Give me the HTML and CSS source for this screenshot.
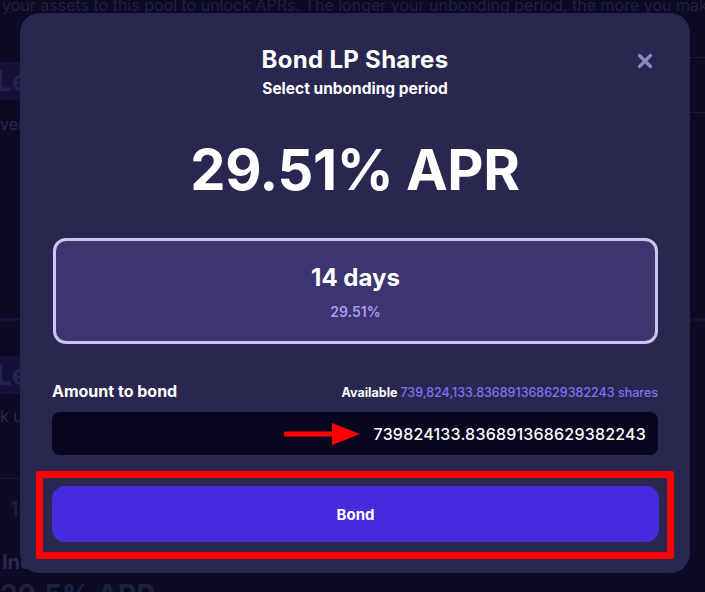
FILE: index.html
```html
<!DOCTYPE html>
<html>
<head>
<meta charset="utf-8">
<link rel="stylesheet" href="styles.css">
</head>
<body>
<div class="page">
  <p class="intro">your assets to this pool to unlock APRs. The longer your unbonding period, the more you make. <u>Learn more</u></p>
  <div class="bg-row">
    <div class="bg-left">
      <div class="bg-head">Le</div>
      <div class="bg-text">ver</div>
    </div>
    <div class="bg-right">
      <div class="bg-head">Li</div>
    </div>
  </div>
  <div class="bg-row2">
    <div class="bg-left">
      <div class="bg-head">Le</div>
      <div class="bg-text">k u</div>
      <div class="bg-card">14</div>
      <div class="bg-inc">Inc</div>
      <div class="bg-apr">29.5% APR</div>
    </div>
  </div>
</div>

<div class="modal">
  <div class="modal-head">
    <h1 class="title">Bond LP Shares</h1>
    <p class="subtitle">Select unbonding period</p>
    <button class="close" aria-label="Close">
      <svg width="16" height="16" viewBox="0 0 16 16"><path d="M2.5 2.5 L13.5 13.5 M13.5 2.5 L2.5 13.5" stroke="#8f89c2" stroke-width="3.2" stroke-linecap="round"/></svg>
    </button>
  </div>
  <div class="apr">29.51% APR</div>
  <div class="period">
    <div class="period-days">14 days</div>
    <div class="period-apr">29.51%</div>
  </div>
  <div class="amount-row">
    <span class="amount-label">Amount to bond</span>
    <span class="avail">Available <span class="avail-val">739,824,133.836891368629382243 shares</span></span>
  </div>
  <div class="input">
    <svg class="arrow" width="78" height="24" viewBox="0 0 78 24"><path d="M2 12 H50" stroke="#ff0000" stroke-width="5" stroke-linecap="round"/><path d="M48 1 L76 12 L48 23 Z" fill="#ff0000"/></svg>
    <span class="input-val">739824133.836891368629382243</span>
  </div>
  <div class="highlight">
    <button class="bond">Bond</button>
  </div>
</div>
</body>
</html>
```
FILE: styles.css
```css
* { box-sizing: border-box; }
html, body { margin: 0; padding: 0; }
body {
  width: 705px;
  height: 592px;
  overflow: hidden;
  background: #0d0a25;
  font-family: Inter, "Liberation Sans", sans-serif;
  position: relative;
}
.page { color: #2a2748; }
.intro {
  margin: -5px 0 0 2px;
  font-size: 16px;
  line-height: 20px;
  white-space: nowrap;
  color: #24213f;
}
.bg-row { display: flex; justify-content: space-between; margin-top: 47px; }
.bg-left { width: 300px; }
.bg-head {
  background: #15113a;
  height: 38px;
  font-size: 28px;
  font-weight: 700;
  line-height: 38px;
  margin-left: -14px;
  padding-left: 10px;
  color: #262250;
}
.bg-text { font-size: 16px; padding: 14px 0 0 0; color: #2b2850; }
.bg-right { width: 90px; border-top: 1px solid #1b1740; border-bottom: 1px solid #1b1740; height: 56px; margin-top: -5px; }
.bg-right .bg-head { background: transparent; margin-left: 0; padding: 8px 0 0 25px; color: #2a2752; }
.bg-row2 { margin-top: 184px; border-top: 3px solid #151236; padding-top: 35px; }
.bg-row2 .bg-text { padding-top: 12px; }
.bg-card { margin-top: 52px; height: 62px; font-size: 20px; font-weight: 700; color: #1f1c40; padding: 18px 0 0 10px; border-top: 1px solid #1a1640; }
.bg-inc { font-size: 20px; font-weight: 700; color: #2c2a4c; padding: 10px 0 0 2px; line-height: 24px; }
.bg-apr { font-size: 28px; font-weight: 700; color: #1d2240; line-height: 30px; margin-top: 6px; }

.modal {
  position: absolute;
  left: 20px;
  top: 13px;
  width: 670px;
  height: 560px;
  background: #29274f;
  border-radius: 20px;
  padding: 31px 32px 0;
  display: flex;
  flex-direction: column;
  color: #fff;
}
.modal-head { position: relative; text-align: center; }
.title {
  margin: 0;
  font-size: 24px;
  line-height: 32px;
  font-weight: 700;
  letter-spacing: 0.3px;
}
.subtitle {
  margin: 3px 0 0;
  font-size: 15.5px;
  line-height: 20px;
  font-weight: 700;
}
.close {
  position: absolute;
  right: 5px;
  top: 9px;
  background: none;
  border: 0;
  padding: 0;
  width: 16px;
  height: 16px;
}
.close svg { display: block; }
.apr {
  text-align: center;
  font-size: 56px;
  font-weight: 700;
  line-height: 72px;
  margin-top: 35px;
  letter-spacing: -0.4px;
}
.period {
  margin: 32px 0 0 1px;
  height: 106px;
  border: 3px solid #cdc4f1;
  border-radius: 13px;
  background: #3d3570;
  display: flex;
  flex-direction: column;
  align-items: center;
  padding-top: 22px;
}
.period-days { font-size: 24px; font-weight: 700; line-height: 30px; }
.period-apr { font-size: 14px; font-weight: 600; color: #a59cf0; margin-top: 10px; line-height: 18px; }
.amount-row {
  display: flex;
  justify-content: space-between;
  align-items: baseline;
  margin-top: 37px;
}
.amount-label { font-size: 16px; font-weight: 700; line-height: 20px; }
.avail { font-size: 12.5px; font-weight: 700; }
.avail-val { color: #7e72f3; font-weight: 500; }
.input {
  margin-top: 11px;
  height: 43px;
  background: #08061f;
  border-radius: 8px;
  display: flex;
  justify-content: flex-end;
  align-items: center;
  padding-right: 12px;
  gap: 12px;
  position: relative;
}
.input-val { font-size: 16px; font-weight: 500; letter-spacing: 0.2px; }
.arrow { display: block; }
.highlight {
  margin: 16px -16px 0 -16px;
  height: 88px;
  border: 7px solid #ff0000;
  border-radius: 2px;
  padding: 8px 8px 0 9px;
}
.bond {
  width: 100%;
  height: 56px;
  border: 0;
  border-radius: 13px;
  background: #462ade;
  color: #fff;
  font-family: Inter, "Liberation Sans", sans-serif;
  font-size: 15px;
  font-weight: 700;
}
```
